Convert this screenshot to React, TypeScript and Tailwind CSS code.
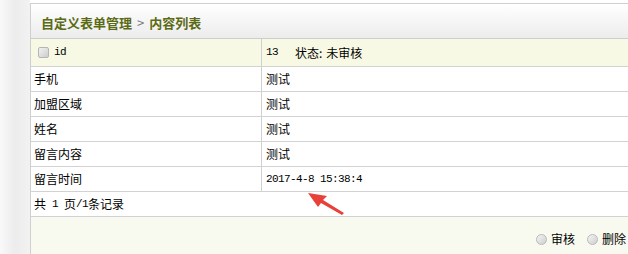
const cjk = "font-['Noto_Sans_CJK_SC','Noto_Sans',sans-serif]";

function Mono({ children }: { children: React.ReactNode }) {
  return (
    <span className="font-['Liberation_Mono','DejaVu_Sans_Mono',monospace] text-[11px] tracking-[-0.6px]">
      {children}
    </span>
  );
}

function Radio({ label }: { label: string }) {
  return (
    <span className="flex items-center gap-[4px]">
      <span className="h-[11px] w-[11px] rounded-full border border-[#b9b9b9] bg-gradient-to-br from-[#f4f4f4] to-[#cfcfcf]" />
      <span>{label}</span>
    </span>
  );
}

export default function App() {
  const rows = [
    { label: "手机", value: "测试" },
    { label: "加盟区域", value: "测试" },
    { label: "姓名", value: "测试" },
    { label: "留言内容", value: "测试" },
    { label: "留言时间", value: <Mono>2017-4-8 15:38:4</Mono> },
  ];

  return (
    <div className={`relative flex h-[254px] w-[628px] overflow-hidden bg-white pt-[3px] text-[12px] text-black ${cjk}`}>
      <div className="-mt-[3px] w-[30px] shrink-0 bg-gradient-to-r from-[#f9f9f9] via-[#ececec] to-[#f2f2f2]" />

      <div className="flex flex-1 flex-col border-l border-t border-[#cfcfcf]">
        {/* header */}
        <div className="flex h-[35px] items-center border-b border-[#cdcdcd] bg-gradient-to-b from-white to-[#ececec] pl-[10px] pt-[3px] text-[13px] font-bold text-[#5b6a14]">
          自定义表单管理
          <span className="mx-[5px] font-normal text-[#777]">&gt;</span>
          内容列表
        </div>

        {/* id row */}
        <div className="flex h-[28px] border-b border-[#d2d2d2] bg-[#f7f9e4]">
          <div className="flex w-[231px] items-center gap-[5px] border-r border-[#d0d0d0] pl-[7px]">
            <span className="h-[11px] w-[11px] rounded-[2px] border border-[#b5b5b5] bg-gradient-to-br from-[#f2f2f2] to-[#cdcdcd]" />
            <Mono>id</Mono>
          </div>
          <div className="flex items-center pl-[4px]">
            <Mono>13</Mono>
            <span className="ml-[17px]">状态:</span>
            <span className="ml-[4px]">未审核</span>
          </div>
        </div>

        {rows.map((row) => (
          <div key={row.label} className="flex h-[25px] border-b border-[#d2d2d2]">
            <div className="flex w-[231px] items-center border-r border-[#d0d0d0] pl-[3px]">
              {row.label}
            </div>
            <div className="flex items-center pl-[4px]">{row.value}</div>
          </div>
        ))}

        {/* footer */}
        <div className="flex h-[25px] items-center border-b border-[#d2d2d2] pl-[3px]">
          共<Mono>&nbsp;1&nbsp;</Mono>页<Mono>/1</Mono>条记录
        </div>

        <div className="flex flex-1 items-start justify-end gap-[12px] bg-[#f9faef] pr-[2px] pt-[13px]">
          <Radio label="审核" />
          <Radio label="删除" />
        </div>
      </div>

      {/* annotation arrow */}
      <svg className="absolute left-[305px] top-[190px]" width="42" height="28" viewBox="0 0 42 28">
        <path d="M3 3 L22 6 L18 10 L39 23 L37 25 L16 13 L13 17 Z" fill="#e8413a" />
      </svg>
    </div>
  );
}
